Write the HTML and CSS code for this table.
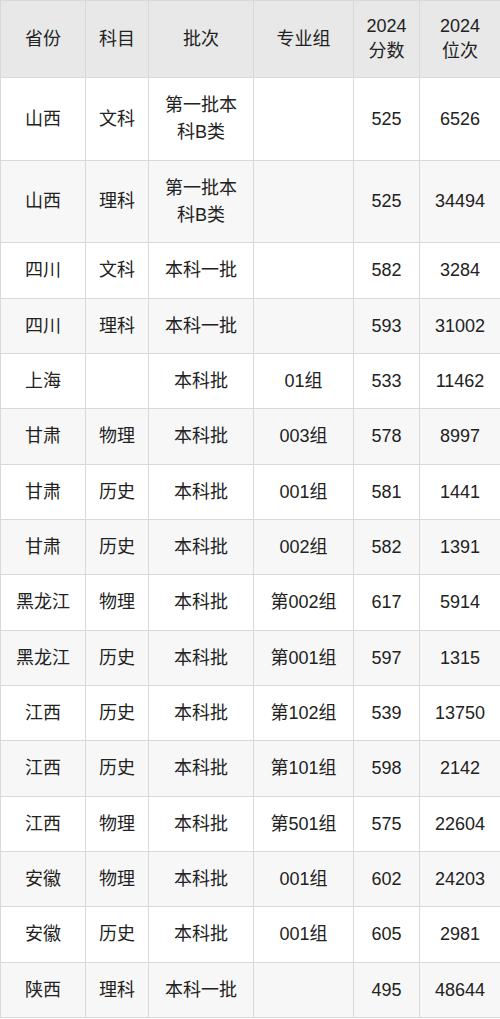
FILE: index.html
```html
<!DOCTYPE html>
<html lang="zh">
<head>
<meta charset="utf-8">
<link rel="stylesheet" href="styles.css">
</head>
<body>
<table class="score-table">
  <colgroup>
    <col class="c1"><col class="c2"><col class="c3"><col class="c4"><col class="c5"><col class="c6">
  </colgroup>
  <thead>
    <tr class="head"><th>省份</th><th>科目</th><th>批次</th><th>专业组</th><th>2024<br>分数</th><th>2024<br>位次</th></tr>
  </thead>
  <tbody>
    <tr class="tall"><td>山西</td><td>文科</td><td>第一批本科B类</td><td></td><td>525</td><td>6526</td></tr>
    <tr class="tall2"><td>山西</td><td>理科</td><td>第一批本科B类</td><td></td><td>525</td><td>34494</td></tr>
    <tr><td>四川</td><td>文科</td><td>本科一批</td><td></td><td>582</td><td>3284</td></tr>
    <tr><td>四川</td><td>理科</td><td>本科一批</td><td></td><td>593</td><td>31002</td></tr>
    <tr><td>上海</td><td></td><td>本科批</td><td>01组</td><td>533</td><td>11462</td></tr>
    <tr><td>甘肃</td><td>物理</td><td>本科批</td><td>003组</td><td>578</td><td>8997</td></tr>
    <tr><td>甘肃</td><td>历史</td><td>本科批</td><td>001组</td><td>581</td><td>1441</td></tr>
    <tr><td>甘肃</td><td>历史</td><td>本科批</td><td>002组</td><td>582</td><td>1391</td></tr>
    <tr><td>黑龙江</td><td>物理</td><td>本科批</td><td>第002组</td><td>617</td><td>5914</td></tr>
    <tr><td>黑龙江</td><td>历史</td><td>本科批</td><td>第001组</td><td>597</td><td>1315</td></tr>
    <tr><td>江西</td><td>历史</td><td>本科批</td><td>第102组</td><td>539</td><td>13750</td></tr>
    <tr><td>江西</td><td>历史</td><td>本科批</td><td>第101组</td><td>598</td><td>2142</td></tr>
    <tr><td>江西</td><td>物理</td><td>本科批</td><td>第501组</td><td>575</td><td>22604</td></tr>
    <tr><td>安徽</td><td>物理</td><td>本科批</td><td>001组</td><td>602</td><td>24203</td></tr>
    <tr><td>安徽</td><td>历史</td><td>本科批</td><td>001组</td><td>605</td><td>2981</td></tr>
    <tr><td>陕西</td><td>理科</td><td>本科一批</td><td></td><td>495</td><td>48644</td></tr>
  </tbody>
</table>
</body>
</html>
```
FILE: styles.css
```css
html, body {
  margin: 0;
  padding: 0;
  background: #ffffff;
}
.score-table {
  width: 500px;
  border-collapse: collapse;
  table-layout: fixed;
  font-family: "Liberation Sans", "Noto Sans CJK SC", sans-serif;
  font-size: 18px;
  color: #222222;
}
.c1 { width: 85px; }
.c2 { width: 63px; }
.c3 { width: 105px; }
.c4 { width: 100px; }
.c5 { width: 66px; }
.c6 { width: 81px; }
.score-table th,
.score-table td {
  border: 1px solid #d9d9d9;
  text-align: center;
  vertical-align: middle;
  padding: 0 10px;
  font-weight: normal;
  height: 55px;
  box-sizing: border-box;
  line-height: 27px;
}
.score-table th {
  background: #e8e8e8;
  line-height: 25px;
}
.head th { height: 77px; }
.tall td { height: 83px; }
.tall2 td { height: 82px; }
.score-table tbody tr:nth-child(3n) td { height: 56px; }
.score-table tbody tr:nth-child(even) td {
  background: #f7f7f7;
}
```
